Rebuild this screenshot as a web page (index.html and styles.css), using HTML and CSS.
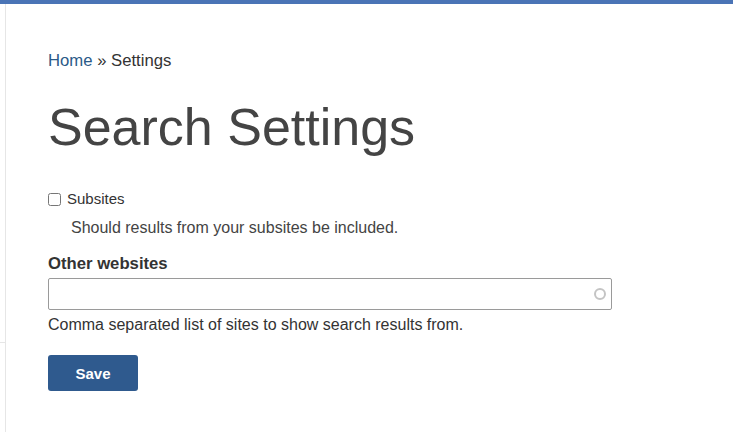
FILE: index.html
```html
<!DOCTYPE html>
<html>
<head>
<meta charset="utf-8">
<link rel="stylesheet" href="styles.css">
</head>
<body>
<div class="topbar"></div>
<div class="layout">
  <aside class="sidebar">
    <div class="sidebar-top"></div>
  </aside>
  <main class="main">
    <nav class="breadcrumb"><a class="crumb-link" href="#">Home</a> » Settings</nav>
    <h1 class="title">Search Settings</h1>
    <form class="form">
      <div class="check-item">
        <label class="check-label"><input type="checkbox" class="checkbox"> Subsites</label>
        <div class="check-desc">Should results from your subsites be included.</div>
      </div>
      <div class="field">
        <label class="field-label">Other websites</label>
        <div class="input-wrap">
          <input type="text" class="text-input">
          <span class="input-icon"></span>
        </div>
        <div class="field-desc">Comma separated list of sites to show search results from.</div>
      </div>
      <button type="button" class="btn-save">Save</button>
    </form>
  </main>
</div>
</body>
</html>
```
FILE: styles.css
```css
html, body {
  margin: 0;
  padding: 0;
  background: #fff;
  font-family: "Liberation Sans", Arial, sans-serif;
  color: #333;
}
.topbar {
  height: 4px;
  background: #4a74b6;
}
.layout {
  display: flex;
  min-height: 428px;
}
.sidebar {
  width: 5px;
  border-right: 1px solid #e6e6e6;
  flex: none;
}
.sidebar-top {
  height: 338px;
  border-bottom: 1px solid #e6e6e6;
}
.main {
  padding: 45px 0 0 42px;
  flex: 1;
}
.breadcrumb {
  font-size: 16.7px;
  line-height: 24px;
  color: #333;
}
.crumb-link {
  color: #2b5a88;
  text-decoration: none;
}
.title {
  margin: 24px 0 0;
  font-size: 52px;
  font-weight: normal;
  line-height: 60px;
  color: #444;
}
.form {
  margin-top: 32px;
}
.check-label {
  display: flex;
  align-items: center;
  font-size: 15px;
  line-height: 20px;
  color: #333;
}
.checkbox {
  margin: 0 6px 0 0;
  width: 13px;
  height: 13px;
}
.check-desc {
  margin: 9px 0 0 23px;
  font-size: 16px;
  line-height: 20px;
  color: #444;
}
.field {
  margin-top: 16px;
}
.field-label {
  display: block;
  font-size: 16.7px;
  font-weight: bold;
  line-height: 20px;
  color: #333;
}
.input-wrap {
  position: relative;
  width: 564px;
  margin-top: 4px;
}
.text-input {
  box-sizing: border-box;
  width: 100%;
  height: 32px;
  border: 1px solid #9a9a9a;
  border-radius: 2px;
  padding: 4px 8px;
  font-size: 15px;
  font-family: inherit;
  display: block;
}
.input-icon {
  position: absolute;
  right: 6px;
  top: 10px;
  width: 8px;
  height: 8px;
  border: 2px solid #c4c4c4;
  border-radius: 50%;
}
.field-desc {
  margin-top: 5px;
  font-size: 16px;
  line-height: 20px;
  color: #333;
}
.btn-save {
  margin-top: 20px;
  width: 90px;
  height: 36px;
  background: #2f5a8e;
  color: #fff;
  border: none;
  border-radius: 3px;
  font-family: inherit;
  font-size: 15px;
  font-weight: bold;
  cursor: pointer;
}
```
